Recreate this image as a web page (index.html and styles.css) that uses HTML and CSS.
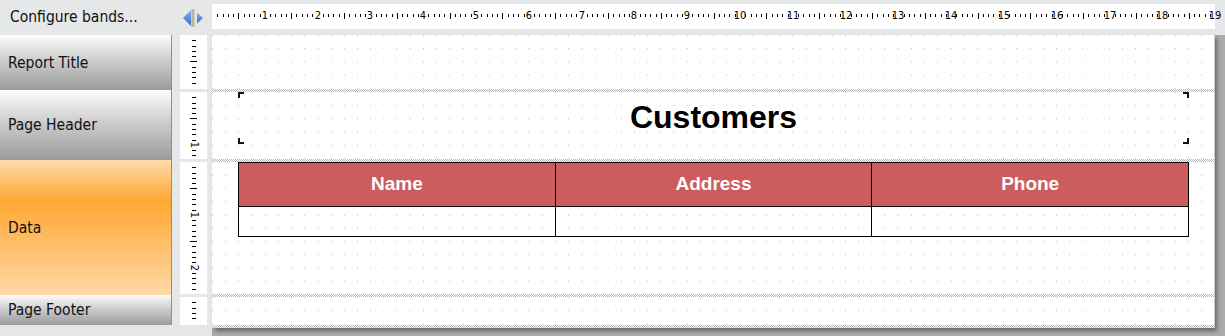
FILE: index.html
```html
<!DOCTYPE html>
<html lang="en">
<head>
    <meta charset="UTF-8">
    <title>Report Designer</title>
    <link rel="stylesheet" href="styles.css">
</head>
<body>
    <div class="toolbar">
        <div class="configure">Configure bands...</div>
        <div class="toggle">
            <svg width="21" height="18" viewBox="0 0 21 18">
                <defs>
                    <linearGradient id="blue" x1="0" y1="0" x2="0" y2="1">
                        <stop offset="0" stop-color="#8fb4ec"/>
                        <stop offset="1" stop-color="#3467c2"/>
                    </linearGradient>
                </defs>
                <path d="M8 1 L0 9 L8 17 Z" fill="url(#blue)"/>
                <rect x="8.5" y="0" width="3" height="18" fill="#bab2a3"/>
                <path d="M14 3.5 L20 9 L14 14.5 Z" fill="url(#blue)"/>
            </svg>
        </div>
        <div class="hruler" id="hruler"></div>
    </div>

    <div class="workspace">
        <div class="bands">
            <div class="band gray report-title">Report Title</div>
            <div class="band gray page-header">Page Header</div>
            <div class="band data">Data</div>
            <div class="band gray page-footer">Page Footer</div>
        </div>

        <div class="vruler">
            <div class="vsection report-title" data-length="54"></div>
            <div class="vsection page-header" data-length="67"></div>
            <div class="vsection data" data-length="132"></div>
            <div class="vsection page-footer" data-length="28"></div>
        </div>

        <div class="surface">
            <div class="page">
                <div class="pband report-title"></div>
                <div class="sep"></div>
                <div class="pband page-header">
                    <div class="title-box">
                        <span class="corner tl"></span>
                        <span class="corner tr"></span>
                        <span class="corner bl"></span>
                        <span class="corner br"></span>
                        Customers
                    </div>
                </div>
                <div class="sep"></div>
                <div class="pband data">
                    <table class="grid">
                        <tr>
                            <th>Name</th>
                            <th>Address</th>
                            <th>Phone</th>
                        </tr>
                        <tr>
                            <td></td>
                            <td></td>
                            <td></td>
                        </tr>
                    </table>
                </div>
                <div class="sep"></div>
                <div class="pband page-footer"></div>
                <div class="sep"></div>
            </div>
        </div>
    </div>

    <script>
        // 1 mm on the designer scale
        const MM = 5.28;

        function buildRuler(ruler, length, vertical) {
            for (let i = 1; i * MM < length - 3; i++) {
                const mark = document.createElement('span');
                if (i % 10 === 0) {
                    mark.className = 'num';
                    mark.textContent = i / 10;
                } else {
                    mark.className = i % 5 === 0 ? 'tick long' : 'tick';
                }
                mark.style[vertical ? 'top' : 'left'] = Math.round(i * MM) + 'px';
                ruler.appendChild(mark);
            }
        }

        buildRuler(document.getElementById('hruler'), 1010, false);
        document.querySelectorAll('.vsection').forEach(section => {
            buildRuler(section, Number(section.dataset.length), true);
        });
    </script>
</body>
</html>
```

FILE: styles.css
```css
body {
    margin: 0;
    background: #e6e7e9;
    font-family: "DejaVu Sans Condensed", "DejaVu Sans", sans-serif;
    color: #111;
    overflow: hidden;
}

/* top strip */
.toolbar {
    display: flex;
    height: 35px;
}
.configure {
    width: 172px;
    box-sizing: border-box;
    padding-left: 10px;
    line-height: 34px;
    font-size: 15.5px;
}
.toggle {
    width: 40px;
    box-sizing: border-box;
    padding-left: 11px;
    display: flex;
    align-items: center;
}
.toggle svg {
    display: block;
}
.hruler {
    position: relative;
    width: 1003px;
    height: 25px;
    margin-top: 4px;
    background: #fff;
}
.hruler .tick {
    position: absolute;
    top: 10px;
    width: 1px;
    height: 3px;
    background: #000;
}
.hruler .tick.long {
    top: 9px;
    height: 6px;
}
.hruler .num {
    position: absolute;
    top: 5px;
    transform: translateX(-50%);
    font-size: 11px;
    line-height: 14px;
    color: #000;
}

/* main area */
.workspace {
    display: flex;
    height: 301px;
}

.bands {
    width: 171px;
    border-right: 1px solid #8e8e8e;
    display: flex;
    flex-direction: column;
    align-self: flex-start;
}
.band {
    display: flex;
    align-items: center;
    padding-left: 8px;
    font-size: 15.5px;
}
.band.gray {
    background: linear-gradient(#fdfdfd, #c9c9c9 50%, #9b9b9b);
}
.band.data {
    background: linear-gradient(#fedcac, #ffa733 30%, #ffd9a6);
}
.band.report-title { height: 55px; }
.band.page-header { height: 70px; }
.band.data { height: 135px; }
.band.page-footer { height: 30px; }

.vruler {
    width: 27px;
    margin-left: 8px;
    display: flex;
    flex-direction: column;
    gap: 3px;
}
.vsection {
    position: relative;
    background: #fff;
}
.vsection.report-title { height: 54px; }
.vsection.page-header { height: 67px; }
.vsection.data { height: 132px; }
.vsection.page-footer { height: 28px; }
.vsection .tick {
    position: absolute;
    left: 12px;
    width: 4px;
    height: 1px;
    background: #000;
}
.vsection .tick.long {
    left: 10px;
    width: 7px;
}
.vsection .num {
    position: absolute;
    left: 13.5px;
    transform: translate(-50%, -50%) rotate(90deg);
    font-size: 11px;
    line-height: 11px;
    color: #000;
}

/* design surface */
.surface {
    flex: 1;
    margin-left: 5px;
    background: #ababab;
}
.page {
    width: 1002px;
    background: #fff;
    display: flex;
    flex-direction: column;
    box-shadow: 1px 0 0 #cfcfcf, 3px 3px 4px rgba(0, 0, 0, 0.4);
}
.pband {
    background-color: #fff;
    background-image: conic-gradient(from 270deg at 1px 1px, #b5b5b5 90deg, transparent 0);
    background-size: 13.2px 13.2px;
}
.pband.report-title { height: 54px; }
.pband.page-header { height: 67px; }
.pband.data { height: 132px; }
.pband.page-footer { height: 28px; }

.sep {
    height: 3px;
    background: repeating-conic-gradient(#b9b9b9 0 25%, #fff 0 50%) 0 0 / 2px 2px;
}

.title-box {
    position: relative;
    width: 951px;
    height: 52px;
    margin-left: 26px;
    box-sizing: border-box;
    padding-bottom: 1px;
    display: flex;
    align-items: center;
    justify-content: center;
    font-family: "Liberation Sans", Arial, sans-serif;
    font-weight: bold;
    font-size: 32px;
    color: #000;
}
.corner {
    position: absolute;
    width: 4px;
    height: 4px;
    border: 0 solid #111;
}
.corner.tl { left: 0; top: 0; border-width: 2px 0 0 2px; }
.corner.tr { right: 0; top: 0; border-width: 2px 2px 0 0; }
.corner.bl { left: 0; bottom: 0; border-width: 0 0 2px 2px; }
.corner.br { right: 0; bottom: 0; border-width: 0 2px 2px 0; }

.grid {
    width: 951px;
    margin-left: 26px;
    border-collapse: collapse;
    table-layout: fixed;
    font-family: "Liberation Sans", Arial, sans-serif;
}
.grid th,
.grid td {
    border: 1px solid #000;
    padding: 0;
}
.grid th {
    height: 44px;
    padding-bottom: 2px;
    box-sizing: border-box;
    background: #cd5c5c;
    color: #fff;
    font-size: 19px;
    font-weight: bold;
}
.grid td {
    height: 30px;
    box-sizing: border-box;
}
```
